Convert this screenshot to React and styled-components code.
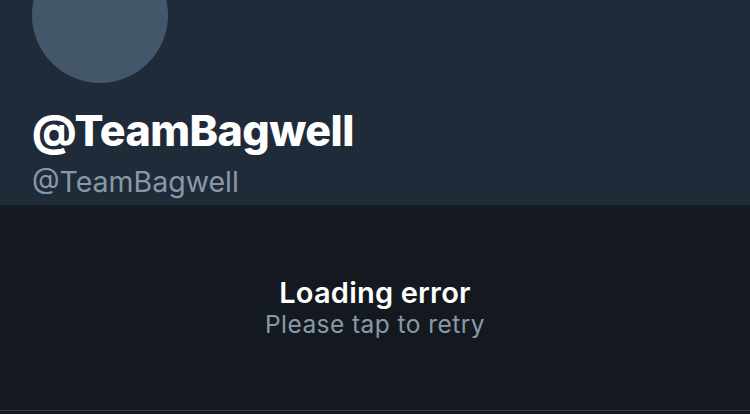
import React from "react";
import styled, { createGlobalStyle } from "styled-components";

const Global = createGlobalStyle`
  html, body { margin: 0; padding: 0; background: #141920; }
  body { font-family: Inter, "Liberation Sans", sans-serif; -webkit-font-smoothing: antialiased; }
`;

const Page = styled.div`
  width: 750px;
  height: 414px;
  overflow: hidden;
  display: flex;
  flex-direction: column;
  background: #141920;
`;

const Header = styled.header`
  height: 205px;
  flex: none;
  background: #202b3a;
  padding: 0 32px;
  display: flex;
  flex-direction: column;
  border-bottom: 1px solid #161c25;
  overflow: hidden;
`;

const Avatar = styled.div`
  width: 136px;
  height: 136px;
  border-radius: 50%;
  background: #44576a;
  margin-top: -53px;
  flex: none;
`;

const Name = styled.h1`
  margin: 22px 0 0;
  font-family: Inter, "Liberation Sans", sans-serif;
  font-weight: 800;
  font-size: 43px;
  line-height: 50px;
  letter-spacing: -0.55px;
  color: #ffffff;
`;

const Handle = styled.div`
  margin-top: 10px;
  font-size: 28.5px;
  line-height: 34px;
  color: #8899a6;
  font-weight: 400;
`;

const Body = styled.main`
  height: 204px;
  flex: none;
  display: flex;
  flex-direction: column;
  align-items: center;
  justify-content: center;
  border-bottom: 1px solid #3b4047;
  cursor: pointer;
`;

const Title = styled.div`
  font-size: 29px;
  font-weight: 600;
  line-height: 32px;
  letter-spacing: 0.2px;
  color: #ffffff;
`;

const Sub = styled.div`
  font-size: 24.5px;
  line-height: 30px;
  letter-spacing: 0.45px;
  color: #8899a6;
`;

export default function App() {
  return (
    <Page>
      <Global />
      <Header>
        <Avatar />
        <Name>@TeamBagwell</Name>
        <Handle>@TeamBagwell</Handle>
      </Header>
      <Body>
        <Title>Loading error</Title>
        <Sub>Please tap to retry</Sub>
      </Body>
    </Page>
  );
}
